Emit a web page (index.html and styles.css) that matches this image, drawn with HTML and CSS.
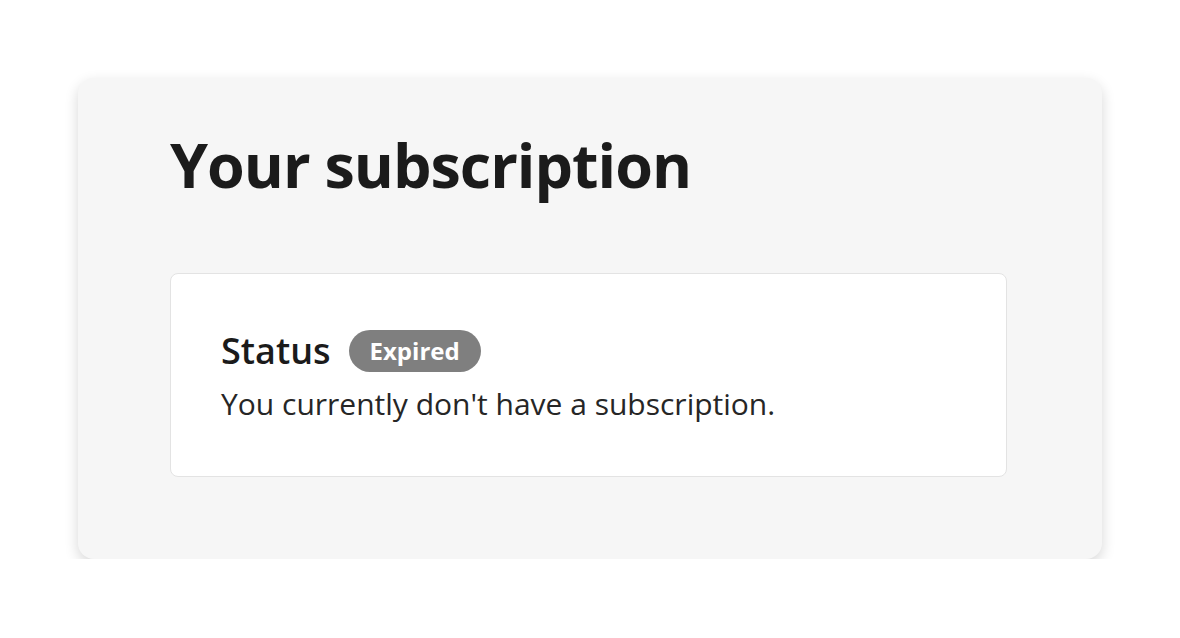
FILE: index.html
```html
<!DOCTYPE html>
<html>
<head>
<title>Your subscription</title>
<meta name="viewport" content="width=device-width, initial-scale=1.0">
<link rel="stylesheet" href="styles.css">
</head>
<body>

<div class="panel">
    <h1>Your subscription</h1>

    <div class="status-card">
        <div class="status-row">
            <span class="status-label">Status</span>
            <span class="badge">Expired</span>
        </div>
        <p class="status-text">You currently don't have a subscription.</p>
    </div>
</div>

</body>
</html>
```

FILE: styles.css
```css
body { margin: 0; background-color: #fff; color: #1b1b1b; font-family: "Open Sans", "Noto Sans", Arial, sans-serif; }
.panel { margin: 78px 0 0 78px; width: 1024px; height: 481px; box-sizing: border-box; padding: 56px 95px 0 92px; background-color: #f6f6f6; border-radius: 16px; box-shadow: 0 5px 14px rgba(0,0,0,0.16); }
h1 { margin: 0; font-size: 61px; font-weight: 700; line-height: 1; letter-spacing: -1px; }
.status-card { margin-top: 78px; height: 204px; box-sizing: border-box; padding: 56px 50px 0 50px; background-color: #fff; border: 1px solid #e3e3e3; border-radius: 8px; }
.status-row { display: flex; align-items: center; gap: 18px; height: 42px; }
.status-label { font-size: 36px; font-weight: 600; line-height: 1; }
.badge { display: inline-flex; align-items: center; height: 42px; box-sizing: border-box; padding: 0 21px 2px 21px; border-radius: 21px; background-color: #7f7f7f; color: #fff; font-size: 24px; font-weight: 700; }
.status-text { margin: 12px 0 0 0; font-size: 30px; line-height: 1.3; color: #262626; }
```
